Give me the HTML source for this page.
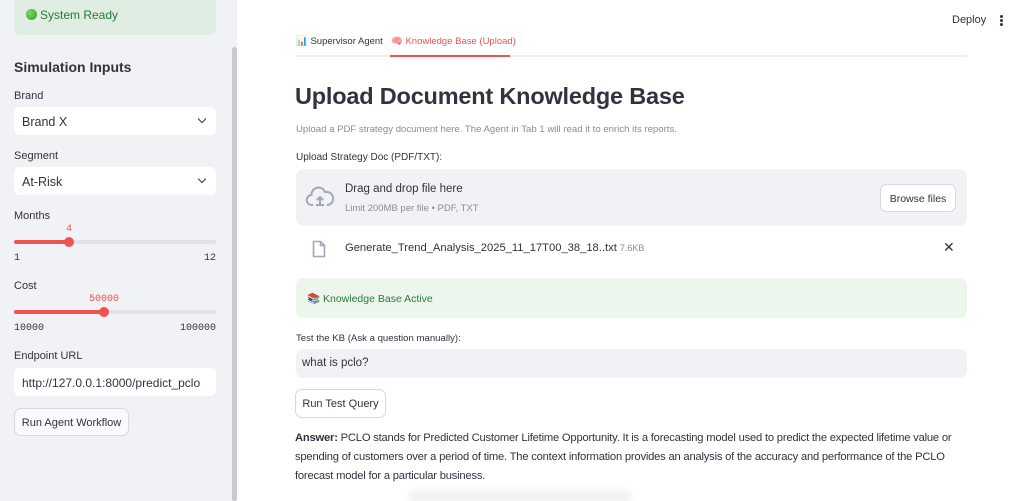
<!DOCTYPE html>
<html style="width:1024px;height:501px;overflow:hidden"><head><meta charset="utf-8"><style>
*{margin:0;padding:0;box-sizing:border-box}
body{width:1024px;height:501px;overflow:hidden;position:relative;background:#fff;font-family:"Liberation Sans",sans-serif;color:#31333f}
.a{position:absolute;white-space:nowrap}
.sb{position:absolute;left:0;top:0;width:237px;height:501px;background:#f0f2f6}
.lbl{font-size:11px;color:#31333f}
.sel{position:absolute;left:14px;width:202px;height:28px;background:#fff;border-radius:6px;font-size:12.5px;padding:8px 0 0 8px}
.chev{position:absolute;right:11px;top:9px;width:6px;height:6px;border-right:1.6px solid #31333f;border-bottom:1.6px solid #31333f;transform:rotate(45deg)}
.mono{font-family:"Liberation Mono",monospace;font-size:10px}
.track{position:absolute;left:14px;width:202px;height:4px;background:#dfe2e8;border-radius:2px}
.fill{position:absolute;left:0;top:0;height:4px;background:#ef5350;border-radius:2px}
.thumb{position:absolute;top:-3px;width:10px;height:10px;border-radius:50%;background:#ef5350;margin-left:-5px}
.btn{position:absolute;background:#fff;border:1px solid #d6d8de;border-radius:7px;font-size:12px;text-align:center}
.ans{font-size:11.2px;line-height:19px;letter-spacing:-0.2px}
</style></head><body>
<div class="sb"></div>
<div class="a" style="left:232px;top:47px;width:5px;height:454px;background:#c9cacf;border-radius:3px"></div>
<div class="a" style="left:14px;top:-8px;width:202px;height:43px;background:#dfede2;border-radius:7px"></div>
<div class="a" style="left:26px;top:9px;width:11px;height:11px;border-radius:50%;background:radial-gradient(circle at 35% 35%,#7cd86a,#2e9b27)"></div>
<div class="a" style="left:40px;top:8px;font-size:12px;color:#2b7a3a">System Ready</div>
<div class="a" style="left:14px;top:59px;font-size:14px;font-weight:bold">Simulation Inputs</div>
<div class="a lbl" style="left:14px;top:90px">Brand</div>
<div class="sel" style="top:107px">Brand X<div class="chev"></div></div>
<div class="a lbl" style="left:14px;top:150px">Segment</div>
<div class="sel" style="top:167px">At-Risk<div class="chev"></div></div>
<div class="a lbl" style="left:14px;top:210px">Months</div>
<div class="a mono" style="left:66px;top:224px;color:#ef5350">4</div>
<div class="track" style="top:240px"><div class="fill" style="width:55px"></div><div class="thumb" style="left:55px"></div></div>
<div class="a mono" style="left:14px;top:253px">1</div>
<div class="a mono" style="left:204px;top:253px">12</div>
<div class="a lbl" style="left:14px;top:280px">Cost</div>
<div class="a mono" style="left:89px;top:294px;color:#ef5350">50000</div>
<div class="track" style="top:310px"><div class="fill" style="width:90px"></div><div class="thumb" style="left:90px"></div></div>
<div class="a mono" style="left:14px;top:323px">10000</div>
<div class="a mono" style="left:180px;top:323px">100000</div>
<div class="a lbl" style="left:14px;top:350px">Endpoint URL</div>
<div class="sel" style="top:368px;font-size:12px">http://127.0.0.1:8000/predict_pclo</div>
<div class="btn" style="left:14px;top:408px;width:115px;height:28px;background:#f9fafb;padding-top:8px;font-size:11px">Run Agent Workflow</div>

<div class="a" style="left:952px;top:14px;font-size:11px">Deploy</div>
<div class="a" style="left:1000px;top:15px;width:3px;height:3px;border-radius:50%;background:#31333f;box-shadow:0 4px 0 #31333f,0 8px 0 #31333f"></div>

<div class="a" style="left:296px;top:55px;width:671px;height:2px;background:#eceef2"></div>
<div class="a" style="left:390px;top:55px;width:120px;height:2px;background:#ef5350"></div>
<div class="a" style="left:296px;top:36px;font-size:9.5px">📊 Supervisor Agent</div>
<div class="a" style="left:391px;top:36px;font-size:9.5px;color:#ef5350">🧠 Knowledge Base (Upload)</div>
<div class="a" style="left:295px;top:83px;font-size:23.5px;font-weight:bold;letter-spacing:-0.2px">Upload Document Knowledge Base</div>
<div class="a" style="left:296px;top:124px;font-size:9.6px;color:#8a8c96">Upload a PDF strategy document here. The Agent in Tab 1 will read it to enrich its reports.</div>
<div class="a" style="left:296px;top:152px;font-size:10px">Upload Strategy Doc (PDF/TXT):</div>
<div class="a" style="left:296px;top:169px;width:671px;height:57px;background:#f0f2f6;border-radius:8px"></div>
<svg class="a" style="left:305px;top:186px" width="30" height="24" viewBox="0 0 30 24"><path d="M8 19H7a5 5 0 0 1-.5-10A7 7 0 0 1 20 6a5.5 5.5 0 0 1 3 13h-1" fill="none" stroke="#a3a8b8" stroke-width="2"/><path d="M11 19h8" stroke="#a3a8b8" stroke-width="2"/><path d="M15 18v-7M12 14l3-3 3 3" fill="none" stroke="#a3a8b8" stroke-width="2"/></svg>
<div class="a" style="left:345px;top:183px;font-size:11.5px">Drag and drop file here</div>
<div class="a" style="left:345px;top:203px;font-size:9.5px;color:#8a8c96">Limit 200MB per file • PDF, TXT</div>
<div class="btn" style="left:880px;top:184px;width:76px;height:28px;padding-top:8px;font-size:10.5px">Browse files</div>
<svg class="a" style="left:312px;top:240px" width="14" height="18" viewBox="0 0 14 18"><path d="M1.5 1.5h7l4 4v11h-11z M8.5 1.5v4h4" fill="none" stroke="#a3a8b8" stroke-width="1.6" stroke-linejoin="round"/></svg>
<div class="a" style="left:345px;top:242px;font-size:11.2px">Generate_Trend_Analysis_2025_11_17T00_38_18..txt <span style="font-size:9px;color:#8a8c96">7.6KB</span></div>
<div class="a" style="left:943px;top:239px;font-size:14px">✕</div>
<div class="a" style="left:296px;top:278px;width:671px;height:40px;background:#ecf6ed;border-radius:7px"></div>
<div class="a" style="left:307px;top:292px;font-size:10.5px;color:#2b7a3a">📚 Knowledge Base Active</div>
<div class="a" style="left:296px;top:333px;font-size:9.6px">Test the KB (Ask a question manually):</div>
<div class="a" style="left:296px;top:349px;width:671px;height:29px;background:#f0f2f6;border-radius:7px;font-size:11.5px;padding:8px 0 0 6px">what is pclo?</div>
<div class="btn" style="left:295px;top:389px;width:91px;height:29px;padding-top:8px;font-size:11px">Run Test Query</div>
<div class="a ans" style="left:295px;top:429px"><b>Answer:</b> PCLO stands for Predicted Customer Lifetime Opportunity. It is a forecasting model used to predict the expected lifetime value or</div>
<div class="a ans" style="left:295px;top:448px">spending of customers over a period of time. The context information provides an analysis of the accuracy and performance of the PCLO</div>
<div class="a ans" style="left:295px;top:467px">forecast model for a particular business.</div>
<div class="a" style="left:410px;top:492px;width:220px;height:9px;background:#ececec;filter:blur(4px)"></div>
</body></html>
